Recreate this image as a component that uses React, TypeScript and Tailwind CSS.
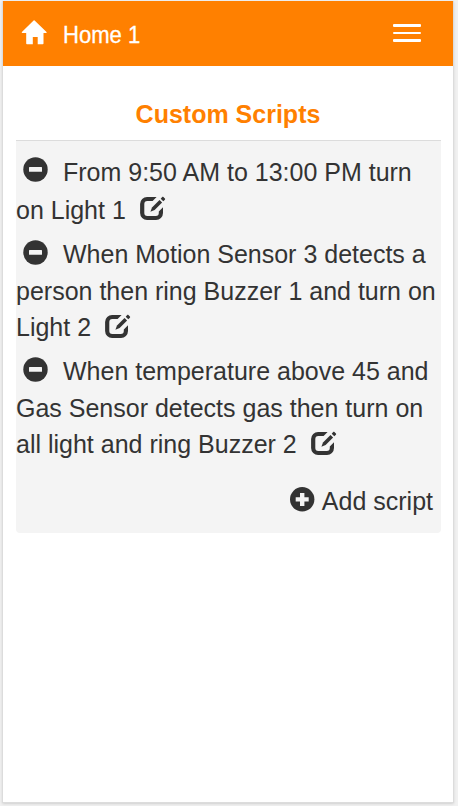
import type { ReactNode } from 'react';

function HomeIcon() {
  return (
    <svg className="mt-[18px] h-[27px] w-[26px] shrink-0" viewBox="0 0 26 27" fill="#fff">
      <path d="M12.600 1.400a.8.8 0 0 1 1 0L25.500 13c.4.500.2.900-.4.900h-2.600v10.600c0 .5-.3.800-.8.800h-5v-7.400h-4.900v7.400H6c-.5 0-.8-.3-.8-.8V13.900H1.300c-.6 0-.8-.4-.4-.9z" />
    </svg>
  );
}

function MinusIcon() {
  return (
    <svg className="ml-[7px] mt-[3px] h-[25px] w-[25px] shrink-0 group-[.lowered]:mt-1" viewBox="0 0 25 25">
      <circle cx="12.500" cy="12.500" r="12.200" fill="#333" />
      <rect x="6" y="10" width="13" height="4.800" rx=".5" fill="#f4f4f4" />
    </svg>
  );
}

function PlusIcon() {
  return (
    <svg className="mt-1 h-[25px] w-[25px] shrink-0" viewBox="0 0 25 25">
      <circle cx="12.200" cy="12.300" r="12.200" fill="#333" />
      <path d="M10 6h4.400v4.200h4.300v4.400h-4.300v4.300H10v-4.300H5.700v-4.400H10z" fill="#f4f4f4" />
    </svg>
  );
}

function EditIcon() {
  return (
    <svg className="ml-[13px] mt-[4px] h-[25px] w-[27px] shrink-0 group-[.lowered]:mt-[5px]" viewBox="0 0 27 25">
      <path d="M17.600 1.100H8.200A7 7 0 0 0 1.100 8.100V17a7 7 0 0 0 7.100 7h8.700a7 7 0 0 0 7.100-7v-5.700l-4.200 4.200V17a3 3 0 0 1-3 3H8.300a3 3 0 0 1-3-3V8.100a3 3 0 0 1 3-3h5.300z" fill="#333" />
      <path d="m11.400 15.700 1.600-4.300 7.500-7.500 2.600 2.600-7.500 7.500z" fill="#333" />
      <path d="m21.700 2.700 1.500-1.600c.4-.4.800-.4 1.200 0l1.500 1.500c.4.400.4.800 0 1.200l-1.600 1.500z" fill="#333" />
    </svg>
  );
}

function FirstLine({ children }: { children: ReactNode }) {
  return (
    <div className="flex h-[37px]">
      <MinusIcon />
      <span className="ml-[15px]">{children}</span>
    </div>
  );
}

export default function App() {
  return (
    <div className="flex h-[806px] w-[458px] flex-col bg-[#f1f1f1] pb-[3px] pl-[2px] pr-[4px] pt-px font-['Liberation_Sans',Arial,sans-serif]">
      <div className="flex flex-1 flex-col border border-t-0 border-[#dcdcdc] bg-white shadow-sm">
        <header className="flex h-[65px] justify-between bg-[#ff8000] pl-[18px] pr-[32px] text-white">
          <div className="flex">
            <HomeIcon />
            <span className="ml-4 mt-[16px] origin-left scale-x-[0.92] text-[24px] leading-[36px] [-webkit-text-stroke:0.3px_white]">Home 1</span>
          </div>
          <div className="mt-[23px] flex flex-col gap-[5px]">
            <span className="h-[3px] w-7 rounded-[1px] bg-white" />
            <span className="h-[2px] w-7 rounded-[1px] bg-white" />
            <span className="h-[3px] w-7 rounded-[1px] bg-white" />
          </div>
        </header>
        <main className="pl-[13px] pr-3 pt-[30px]">
          <h1 className="h-[44px] pr-px text-center text-[25px] font-bold leading-[37px] text-[#ff8000]">Custom Scripts</h1>
          <section className="h-[393px] whitespace-nowrap rounded-b-[4px] border-t border-[#dcdcdc] bg-[#f4f4f4] pt-[13px] text-[25px] leading-[37px] text-[#333]">
            <div className="h-[82px]">
              <FirstLine>From 9:50 AM to 13:00 PM turn</FirstLine>
              <div className="mt-px flex">
                <span>on Light 1</span>
                <EditIcon />
              </div>
            </div>
            <div className="group lowered h-[117px]">
              <FirstLine>When Motion Sensor 3 detects a</FirstLine>
              <div className="h-9">person then ring Buzzer 1 and turn on</div>
              <div className="flex">
                <span>Light 2</span>
                <EditIcon />
              </div>
            </div>
            <div className="group lowered h-[117px]">
              <FirstLine>When temperature above 45 and</FirstLine>
              <div className="h-9">Gas Sensor detects gas then turn on</div>
              <div className="flex">
                <span>all light and ring Buzzer 2</span>
                <EditIcon />
              </div>
            </div>
            <div className="mt-[13px] flex justify-end gap-[7px] pr-2">
              <PlusIcon />
              <span>Add script</span>
            </div>
          </section>
        </main>
      </div>
    </div>
  );
}
